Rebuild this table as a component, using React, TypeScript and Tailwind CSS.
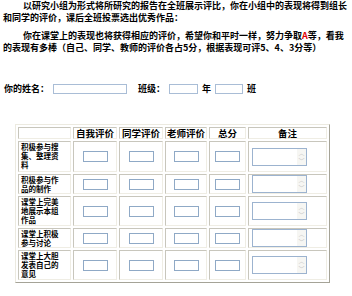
import React from 'react';

const rows: { label: string[]; h: string }[] = [
  { label: ['积极参与搜', '集、整理资', '料'], h: 'h-[31px]' },
  { label: ['积极参与作', '品的制作'], h: 'h-[19px]' },
  { label: ['课堂上完美', '地展示本组', '作品'], h: 'h-[30px]' },
  { label: ['课堂上积极', '参与讨论'], h: 'h-[20px]' },
  { label: ['课堂上大胆', '发表自己的', '意见'], h: 'h-[30px]' },
];

const headers = ['自我评价', '同学评价', '老师评价', '总分', '备注'];

const cell = 'border border-t-[#c8c6bc] border-l-[#c8c6bc] border-r-[#efede4] border-b-[#efede4] p-0';

const Box = () => (
  <div className="mx-auto h-[11px] w-[25px] border border-[#8fa9c6] bg-white" />
);

// disabled multi-line box with its little scrollbar
const Memo = () => (
  <div className="ml-[3px] flex h-[18px] w-[55px] border border-[#9cb3cf] bg-white">
    <div className="flex-1" />
    <div className="flex w-[9px] flex-col items-center justify-between bg-[#f6f6f3] py-px text-[6px] leading-[6px] text-[#c4c4c4]">
      <span>︿</span>
      <span>﹀</span>
    </div>
  </div>
);

export default function App() {
  return (
    <div className="h-[296px] w-[352px] bg-white text-black" style={{ fontFamily: '"Noto Sans CJK SC", sans-serif' }}>
      {/* intro */}
      <div className="px-[3px] text-[9px] font-bold leading-[12px]">
        <p className="indent-[20px]">
          以研究小组为形式将所研究的报告在全班展示评比，你在小组中的表现将得到组长和同学的评价，课后全班投票选出优秀作品：
        </p>
        <p className="mt-[6px] indent-[20px]">
          你在课堂上的表现也将获得相应的评价，希望你和平时一样，努力争取<span className="text-[#e00000]">A</span>等，看我的表现有多棒（自己、同学、教师的评价各占5分，根据表现可评5、4、3分等）
        </p>
      </div>

      {/* name / class */}
      <div className="mt-[30px] flex h-[10px] items-center px-[4px] text-[9px] font-bold leading-[10px]">
        <span>你的姓名：</span>
        <div className="ml-[4px] h-[10px] w-[74px] border border-[#a9bdd6] bg-white" />
        <span className="ml-[11px]">班级：</span>
        <div className="ml-[4px] h-[10px] w-[29px] border border-[#a9bdd6] bg-white" />
        <span className="ml-[4px]">年</span>
        <div className="ml-[4px] h-[10px] w-[28px] border border-[#a9bdd6] bg-white" />
        <span className="ml-[4px]">班</span>
      </div>

      {/* score sheet */}
      <table className="ml-[15px] mt-[30px] w-[315px] table-fixed border-separate border-spacing-[2px] border border-t-[#eceae0] border-l-[#eceae0] border-r-[#a5a397] border-b-[#a5a397]">
        <colgroup>
          <col className="w-[53px]" />
          <col className="w-[44px]" />
          <col className="w-[44px]" />
          <col className="w-[42px]" />
          <col className="w-[37px]" />
          <col className="w-[79px]" />
        </colgroup>
        <thead>
          <tr>
            <th className={`${cell} h-[11px]`} />
            {headers.map(h => (
              <th key={h} className={`${cell} h-[11px] text-center text-[9.5px] font-bold leading-[10px]`}>
                {h}
              </th>
            ))}
          </tr>
        </thead>
        <tbody>
          {rows.map((r, i) => (
            <tr key={i}>
              <td className={`${cell} ${r.h} px-[2px] align-top text-[7.5px] font-bold leading-[9px]`}>
                {r.label.map((l, j) => (
                  <div key={j}>{l}</div>
                ))}
              </td>
              <td className={`${cell} align-middle`}><Box /></td>
              <td className={`${cell} align-middle`}><Box /></td>
              <td className={`${cell} align-middle`}><Box /></td>
              <td className={`${cell} align-middle`}><Box /></td>
              <td className={`${cell} align-middle`}><Memo /></td>
            </tr>
          ))}
        </tbody>
      </table>
    </div>
  );
}
